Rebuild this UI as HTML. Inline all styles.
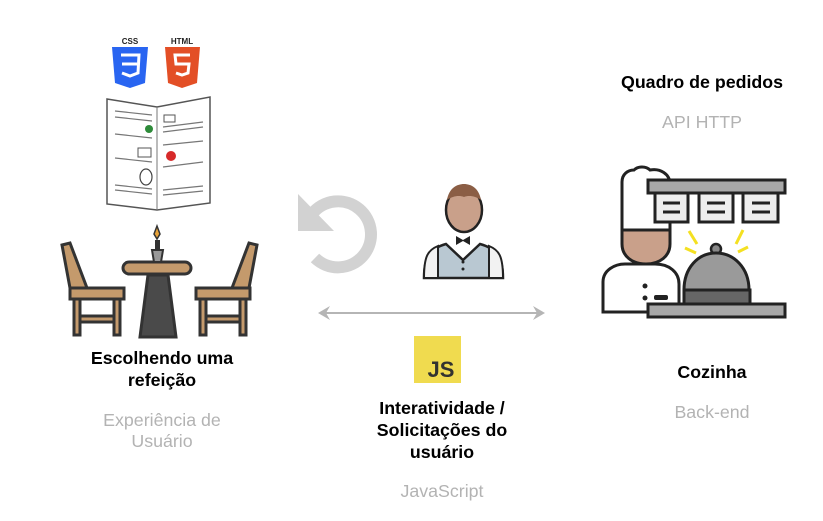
<!DOCTYPE html>
<html><head><meta charset="utf-8"><style>
html,body{margin:0;padding:0;background:#fff;width:823px;height:521px;overflow:hidden}
svg{display:block}
text{font-family:"Liberation Sans",Arial,sans-serif;text-anchor:middle}
.b{font-weight:bold;font-size:17.8px;fill:#000}
.g{font-size:17.8px;fill:#b3b3b3}
</style></head><body>
<svg width="823" height="521" viewBox="0 0 823 521" xmlns="http://www.w3.org/2000/svg">
<text x="130" y="44" style="font-size:8px;font-weight:bold;fill:#222">CSS</text>
<path d="M112 47h36l-3 36-15 5-15-5z" fill="#2965f1"/>
<path d="M121 55h18l-1 18-8 3-8-3" fill="none" stroke="#fff" stroke-width="3"/>
<path d="M122 64h15" stroke="#fff" stroke-width="3"/>
<text x="182" y="44" style="font-size:8px;font-weight:bold;fill:#222">HTML</text>
<path d="M165 47h35l-3 36-15 5-14-5z" fill="#e34f26"/>
<path d="M190 55h-15l1 9h13l-1 9-6 2-6-2" fill="none" stroke="#fff" stroke-width="3"/>
<path d="M107 99l50 8 53-10v106l-53 7-50-6z" fill="#fff" stroke="#555" stroke-width="1.5"/>
<line x1="157" y1="107" x2="157" y2="210" stroke="#777"/>
<g stroke="#777" stroke-width="1.2">
<line x1="115" y1="111" x2="152" y2="115"/><line x1="115" y1="117" x2="152" y2="121"/>
<line x1="115" y1="134" x2="152" y2="138"/><line x1="115" y1="158" x2="152" y2="162"/>
<line x1="115" y1="185" x2="152" y2="189"/><line x1="115" y1="190" x2="152" y2="194"/>
<line x1="163" y1="127" x2="203" y2="122"/><line x1="163" y1="132" x2="203" y2="127"/>
<line x1="163" y1="145" x2="203" y2="141"/><line x1="163" y1="167" x2="203" y2="162"/>
<line x1="163" y1="190" x2="203" y2="186"/><line x1="163" y1="195" x2="203" y2="191"/>
</g>
<circle cx="149" cy="129" r="4" fill="#2e8b3a"/>
<circle cx="171" cy="156" r="5" fill="#d72a2a"/>
<rect x="138" y="148" width="13" height="9" fill="none" stroke="#555"/>
<rect x="164" y="115" width="11" height="7" fill="none" stroke="#555"/>
<ellipse cx="146" cy="177" rx="6" ry="8" fill="none" stroke="#444" stroke-width="1.2"/>
<g stroke="#333" stroke-width="3" fill="#c49a6c">
<path d="M62 245l8-2 17 45h-17z"/>
<rect x="70" y="288" width="54" height="11"/>
<rect x="74" y="299" width="6" height="36"/><rect x="114" y="299" width="6" height="36"/>
<rect x="80" y="316" width="34" height="6"/>
<path d="M257 245l-8-2-17 45h17z"/>
<rect x="196" y="288" width="54" height="11"/>
<rect x="200" y="299" width="6" height="36"/><rect x="240" y="299" width="6" height="36"/>
<rect x="206" y="316" width="34" height="6"/>
</g>
<path d="M148 275h20l8 62h-36z" fill="#4a4a4a" stroke="#333" stroke-width="3"/>
<rect x="123" y="262" width="68" height="12" rx="6" fill="#c49a6c" stroke="#333" stroke-width="3"/>
<path d="M152 250h11l-2 12h-7z" fill="#999" stroke="#333" stroke-width="2"/>
<path d="M157 226l3 8-3 5-3-5z" fill="#e8a33a" stroke="#333" stroke-width="1.5"/>
<rect x="155" y="240" width="5" height="10" fill="#333"/>
<text class="b" x="162" y="364">Escolhendo uma</text>
<text class="b" x="162" y="386">refeição</text>
<text class="g" x="162" y="426">Experiência de</text>
<text class="g" x="162" y="447">Usuário</text>
<path d="M312 214 A33 33 0 1 1 315 258" fill="none" stroke="#d2d2d2" stroke-width="12"/>
<path d="M298 194v37h36z" fill="#d2d2d2"/>
<path d="M424 278c0-24 8-30 22-34l17 16 17-16c14 4 23 10 23 34z" fill="#b9c8d2" stroke="#222" stroke-width="2.5"/>
<path d="M424 278c0-22 4-28 14-32v32z M503 278c0-22-4-28-14-32v32z" fill="#f2f2f2" stroke="#222" stroke-width="2"/>
<path d="M456 236l7 4 7-4v9l-7-4-7 4z" fill="#222"/>
<circle cx="463" cy="262" r="1.5" fill="#222"/><circle cx="463" cy="269" r="1.5" fill="#222"/>
<ellipse cx="464" cy="210" rx="18" ry="22" fill="#c9a08a" stroke="#222" stroke-width="2.5"/>
<path d="M447 200c2-12 10-16 17-16s15 4 17 16c-6-4-12-5-17-3-5-2-11-1-17 3z" fill="#8b5e45"/>
<line x1="322" y1="313" x2="540" y2="313" stroke="#b5b5b5" stroke-width="2"/>
<path d="M318 313l12-7-4 7 4 7z M545 313l-12-7 4 7-4 7z" fill="#b5b5b5"/>
<rect x="414" y="336" width="47" height="47" fill="#f0db4f"/>
<text x="441" y="377" style="font-size:22px;font-weight:bold;fill:#323330">JS</text>
<text class="b" x="442" y="414">Interatividade /</text>
<text class="b" x="442" y="436">Solicitações do</text>
<text class="b" x="442" y="458">usuário</text>
<text class="g" x="442" y="497">JavaScript</text>
<text class="b" x="702" y="88">Quadro de pedidos</text>
<text class="g" x="702" y="128">API HTTP</text>
<path d="M603 312v-30c0-12 12-18 22-18h30c14 0 24 8 24 20v28z" fill="#fff" stroke="#222" stroke-width="3"/>
<circle cx="645" cy="286" r="2.5" fill="#222"/><circle cx="645" cy="298" r="2.5" fill="#222"/>
<rect x="654" y="295" width="14" height="5" rx="2" fill="#222"/>
<path d="M622 230h48v14c0 12-10 20-24 20s-24-8-24-20z" fill="#c9a08a" stroke="#222" stroke-width="3"/>
<path d="M622 230v-48c0-8 6-12 12-12 4-4 12-4 16 0 10-2 20 4 20 14v46z" fill="#fff" stroke="#222" stroke-width="3"/>
<rect x="648" y="180" width="137" height="13" fill="#a8a8a8" stroke="#222" stroke-width="3"/>
<g fill="#eee" stroke="#222" stroke-width="3">
<rect x="655" y="193" width="33" height="29"/><rect x="699" y="193" width="34" height="29"/><rect x="743" y="193" width="35" height="29"/>
</g>
<g stroke="#222" stroke-width="3">
<line x1="663" y1="203" x2="680" y2="203"/><line x1="663" y1="212" x2="680" y2="212"/>
<line x1="707" y1="203" x2="725" y2="203"/><line x1="707" y1="212" x2="725" y2="212"/>
<line x1="752" y1="203" x2="770" y2="203"/><line x1="752" y1="212" x2="770" y2="212"/>
</g>
<g stroke="#f4e021" stroke-width="3">
<line x1="689" y1="231" x2="697" y2="244"/><line x1="685" y1="248" x2="696" y2="253"/>
<line x1="743" y1="230" x2="736" y2="244"/><line x1="748" y1="247" x2="738" y2="252"/>
</g>
<circle cx="716" cy="249" r="5" fill="#888" stroke="#222" stroke-width="2.5"/>
<path d="M684 290c0-22 14-37 32-37s33 15 33 37z" fill="#9a9a9a" stroke="#222" stroke-width="3"/>
<rect x="684" y="290" width="66" height="14" fill="#666" stroke="#222" stroke-width="3"/>
<rect x="648" y="304" width="137" height="13" fill="#a8a8a8" stroke="#222" stroke-width="3"/>
<text class="b" x="712" y="378">Cozinha</text>
<text class="g" x="712" y="418">Back-end</text>
</svg>
</body></html>
